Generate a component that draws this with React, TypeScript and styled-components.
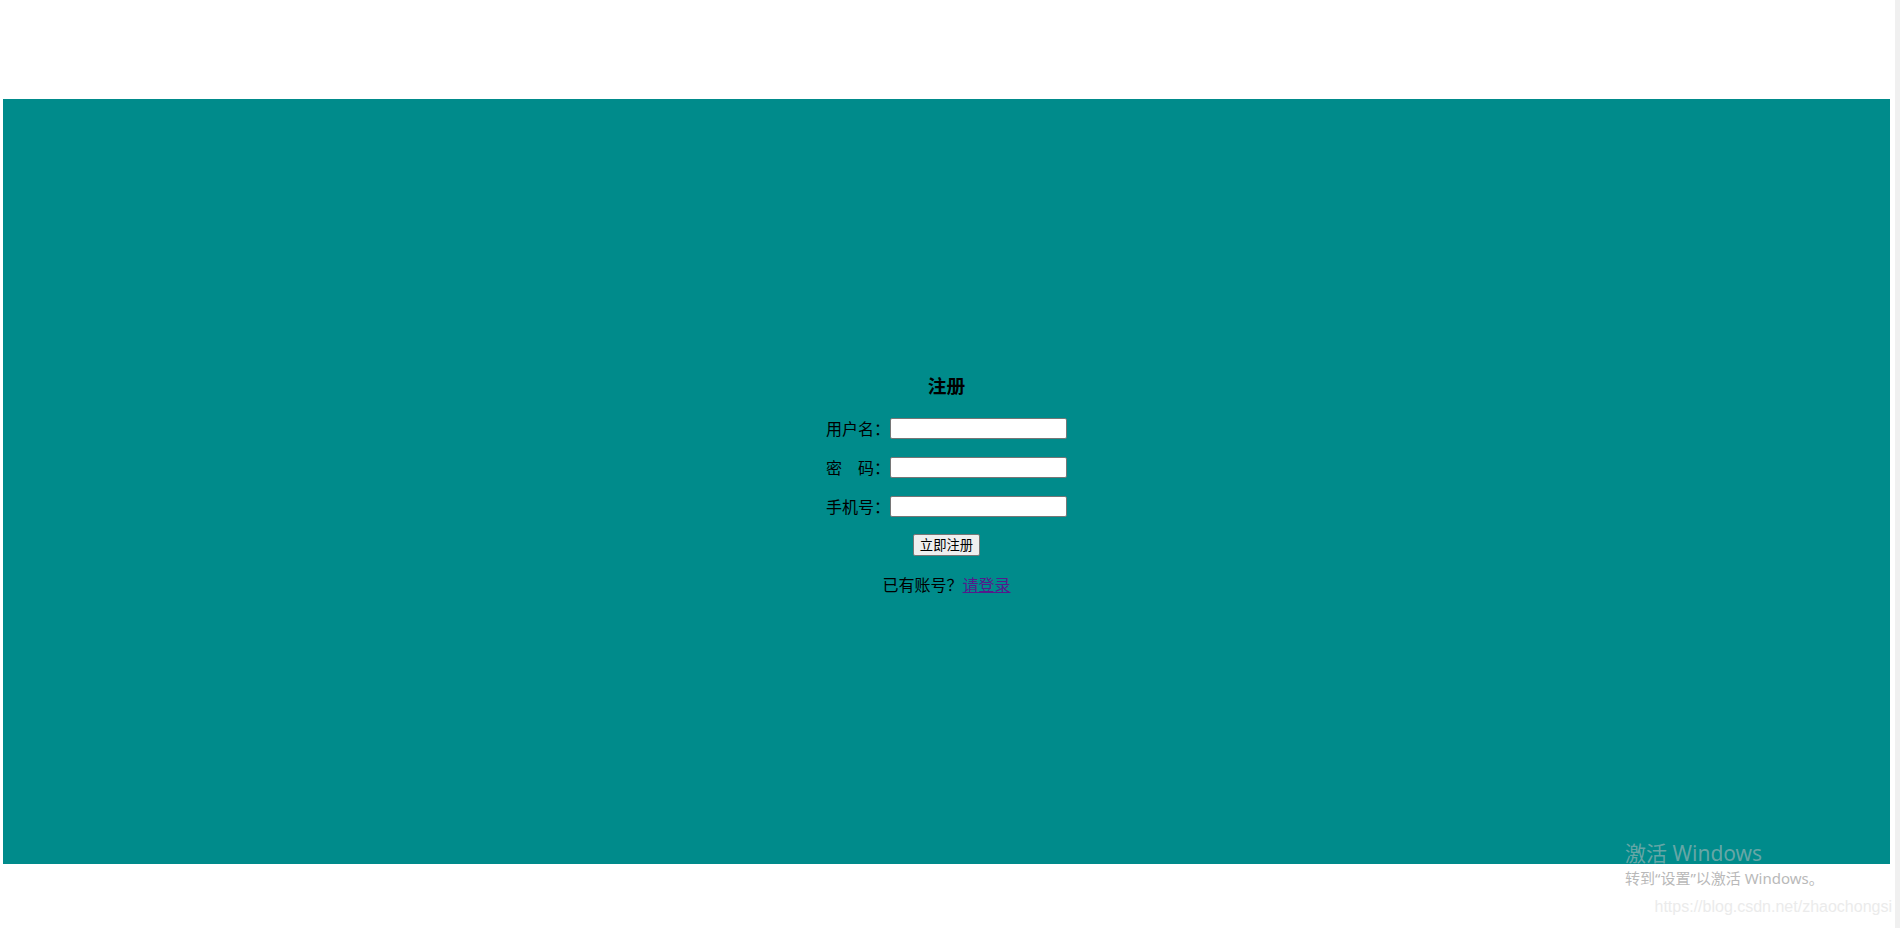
import React from 'react';
import styled, { createGlobalStyle } from 'styled-components';

const GlobalStyle = createGlobalStyle`
  html, body {
    margin: 0;
    padding: 0;
    background: #fff;
    overflow: hidden;
  }
  body {
    font-family: "Noto Sans CJK SC", "Liberation Sans", sans-serif;
  }
`

const Page = styled.div`
  position: relative;
  display: flex;
  width: 1900px;
  height: 928px;
`

const Main = styled.div`
  flex: 1;
  padding: 99px 0 0 3px;
`

const ScrollTrack = styled.div`
  width: 5px;
  background: #f0f0f0;
`

const Panel = styled.div`
  box-sizing: border-box;
  width: 1887px;
  height: 765px;
  padding-top: 274px;
  background: #008b8b;
  display: flex;
  flex-direction: column;
  align-items: center;
`

const Title = styled.h3`
  margin: 0 0 21px;
  font-size: 18.72px;
  line-height: 24px;
  font-weight: bold;
  color: #000;
`

const Field = styled.div`
  display: flex;
  align-items: center;
  height: 21px;
  margin-bottom: 18px;
  &:last-of-type {
    margin-bottom: 17px;
  }
`

const Label = styled.label`
  width: 64px;
  font-size: 16px;
  line-height: 21px;
  color: #000;
  white-space: pre;
`

const Input = styled.input`
  box-sizing: border-box;
  width: 177px;
  height: 21px;
  margin: 0;
  padding: 1px 2px;
  border: 1px solid #767676;
  border-radius: 2px;
  background: #fff;
  font-size: 13.33px;
`

const SubmitButton = styled.button`
  box-sizing: border-box;
  height: 22px;
  margin: 0 0 18px;
  padding: 0 6px;
  border: 1px solid #767676;
  border-radius: 2px;
  background: #efefef;
  color: #000;
  font-family: "Noto Sans CJK SC", sans-serif;
  font-size: 13.33px;
  line-height: 18px;
`

const Footer = styled.p`
  margin: 0;
  font-size: 16px;
  line-height: 20px;
  color: #000;
`

const LoginLink = styled.a`
  color: #551a8b;
  text-decoration: underline;
`

const Watermark = styled.div`
  position: absolute;
  left: 1625px;
  top: 839px;
  font-family: "Noto Sans", "Noto Sans CJK SC", sans-serif;
  pointer-events: none;
`

const WatermarkTitle = styled.div`
  font-size: 21px;
  line-height: 28px;
  color: rgba(190, 190, 190, 0.55);
`

const WatermarkHint = styled.div`
  margin-top: 2px;
  font-size: 15px;
  line-height: 18px;
  color: #b9b9b9;
`

const SourceUrl = styled.div`
  position: absolute;
  right: 8px;
  top: 897px;
  font-family: "Liberation Sans", Arial, sans-serif;
  font-size: 16px;
  line-height: 20px;
  color: #ebebeb;
  pointer-events: none;
`

const fields = [
  { label: '用户名：', type: 'text' },
  { label: '密\u3000码：', type: 'password' },
  { label: '手机号：', type: 'text' },
]

const App = () => (
  <>
    <GlobalStyle />
    <Page>
      <Main>
        <Panel>
          <Title>注册</Title>
          {fields.map(f => (
            <Field key={f.label}>
              <Label>{f.label}</Label>
              <Input type={f.type} />
            </Field>
          ))}
          <SubmitButton type="button">立即注册</SubmitButton>
          <Footer>
            已有账号？<LoginLink href="#">请登录</LoginLink>
          </Footer>
        </Panel>
      </Main>
      <ScrollTrack />
      <Watermark>
        <WatermarkTitle>激活 Windows</WatermarkTitle>
        <WatermarkHint>转到“设置”以激活 Windows。</WatermarkHint>
      </Watermark>
      <SourceUrl>https://blog.csdn.net/zhaochongsi</SourceUrl>
    </Page>
  </>
)

export default App;
